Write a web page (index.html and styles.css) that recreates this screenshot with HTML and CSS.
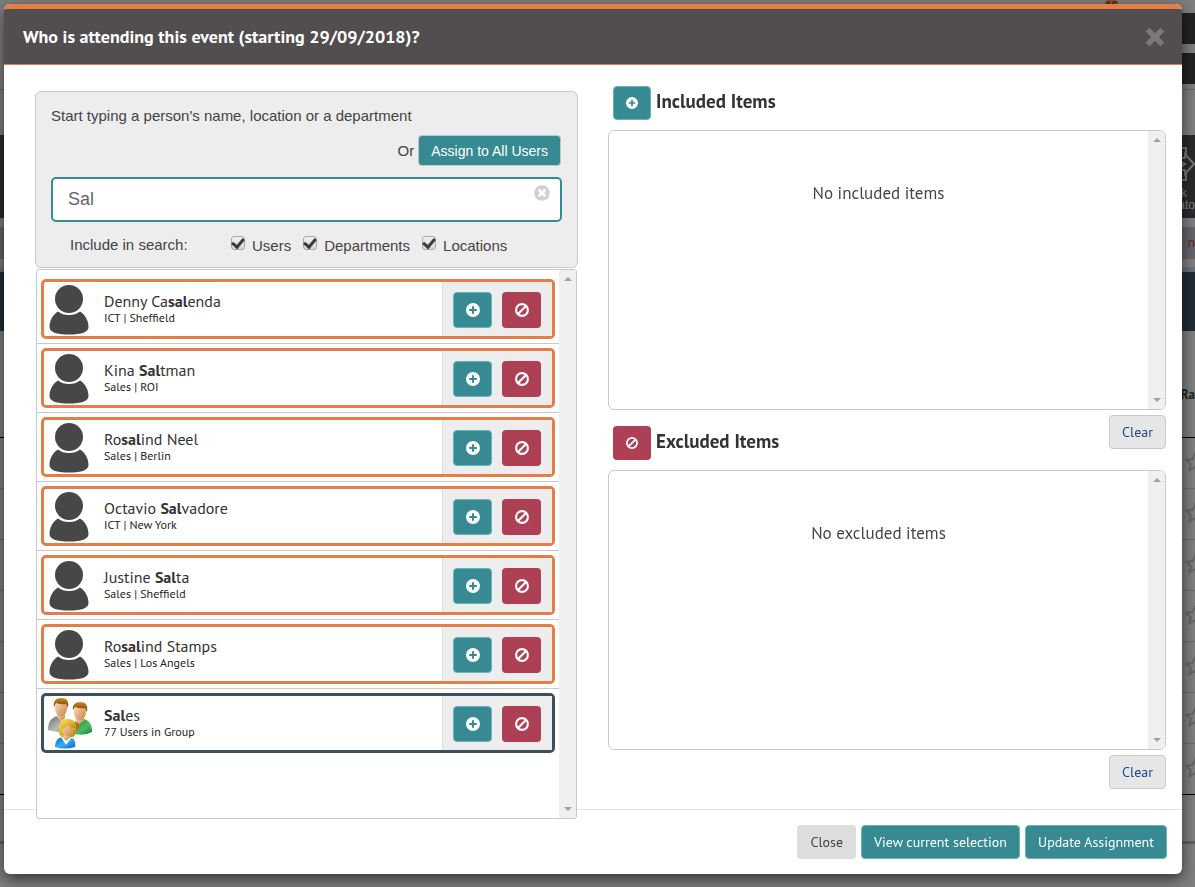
FILE: index.html
```html
<!DOCTYPE html>
<html lang="en">
<head>
<meta charset="utf-8">
<title>Event attendance</title>
<link rel="stylesheet" href="styles.css">
</head>
<body>
<svg class="sprite" aria-hidden="true">
  <symbol id="plus" viewBox="0 0 14 14"><path fill="currentColor" fill-rule="evenodd" d="M7 0a7 7 0 1 1 0 14A7 7 0 0 1 7 0zM6 3.2V6H3.2v2H6v2.8h2V8h2.800V6H8V3.200z"/></symbol>
  <symbol id="ban" viewBox="0 0 14 14"><g fill="none" stroke="currentColor" stroke-width="2.100"><circle cx="7" cy="7" r="5.900"/><path d="M3 11L11 3"/></g></symbol>
  <symbol id="times" viewBox="0 0 20 20"><path d="M4.500 4.500l11 11M15.500 4.500l-11 11" stroke="currentColor" stroke-width="5.400" stroke-linecap="square" stroke-linejoin="round"/></symbol>
  <symbol id="clear-x" viewBox="0 0 16 16"><circle cx="8" cy="8" r="7.800" fill="#d0d0d0"/><path d="M5.700 5.700l4.600 4.600M10.300 5.700l-4.600 4.600" stroke="#fff" stroke-width="2.800" stroke-linecap="square"/></symbol>
  <symbol id="person" viewBox="0 0 40 50"><circle cx="20" cy="14" r="14" fill="#474747"/><path fill="#474747" d="M9 26.500q4.500 3.500 11 3.500t11-3.500c5 3 8.500 9 8.500 15.500C39.500 47 33 49.500 20 49.500S.5 47 .5 42C.5 35.500 4 29.500 9 26.500z"/></symbol>
  <symbol id="group" viewBox="0 0 46 52">
    <defs>
      <linearGradient id="skin" x1="0" x2="1" y2="1"><stop offset="0" stop-color="#ffe3bd"/><stop offset="1" stop-color="#c68144"/></linearGradient>
      <linearGradient id="grey" x2="1" y2="1"><stop offset="0" stop-color="#6c6c6c"/><stop offset=".6" stop-color="#bcbcbc"/><stop offset="1" stop-color="#636363"/></linearGradient>
      <linearGradient id="green" x2="1" y2="1"><stop offset="0" stop-color="#168237"/><stop offset=".6" stop-color="#4bbc64"/><stop offset="1" stop-color="#168237"/></linearGradient>
      <linearGradient id="blue" x2="1" y2="1"><stop offset="0" stop-color="#0768bb"/><stop offset=".5" stop-color="#36adf3"/><stop offset="1" stop-color="#0768bb"/></linearGradient>
      <linearGradient id="blond" x2="1" y2="1"><stop offset="0" stop-color="#fae04d"/><stop offset="1" stop-color="#b98508"/></linearGradient>
      <linearGradient id="brown" x2="0" y2="1"><stop offset="0" stop-color="#c98f20"/><stop offset="1" stop-color="#6a3506"/></linearGradient>
    </defs>
    <path fill="url(#grey)" d="M1 32c0-8 3-12 9-14l9 4 4 10q-10 4-22 0z"/>
    <path fill="#fff" d="M10 18l5 6 5-5z"/>
    <path fill="url(#skin)" d="M10 15h8v5l-3 3-5-4z"/>
    <ellipse cx="14" cy="10" rx="6" ry="8.500" fill="url(#skin)"/>
    <path fill="url(#brown)" d="M7 9C6 3 9 0 14 0c6 0 8 3 7 10l-2-4q-5 1-10-1z"/>
    <path fill="url(#green)" d="M24 35l2-10 5-3 6-1c6 2 8 6 8 13q-9 5-21 1z"/>
    <path fill="#fff" d="M28 22l3 5 6-5z"/><path fill="#e4521b" d="M30 24h2v7h-3z"/>
    <path fill="url(#skin)" d="M29 18h8v4l-5 4-4-4z"/>
    <ellipse cx="33" cy="14" rx="6" ry="8" fill="url(#skin)"/>
    <path fill="url(#brown)" d="M26 12c-1-5 2-8 7-8 6 0 8 3 7 10l-2-4q-5 1-10-1z"/>
    <path fill="url(#blond)" d="M12 34c-1-9 3-13 9-13s9 4 8 12c0 4-2 6-5 6h-7c-3 0-5-2-5-5z"/>
    <path fill="url(#blue)" d="M8 49c0-6 3-10 9-10h6c4 1 6 4 5 10q-10 3-20 0z"/>
    <path fill="#fff" d="M14 39l5 8 6-8z"/>
    <path fill="url(#skin)" d="M17 36h6v4l-4 3-3-3z"/>
    <ellipse cx="21" cy="31" rx="6" ry="7.500" fill="url(#skin)"/>
    <path fill="url(#blond)" d="M14 31c0-6 3-8 7-8 4 0 7 3 7 7-4 0-7-2-8-3-1 2-3 4-6 4z"/>
  </symbol>
  <symbol id="star" viewBox="0 0 20 20"><path fill="none" stroke="#666" stroke-width="2" d="M10 1.500l2.600 5.600 6.100.8-4.500 4.200 1.200 6.100L10 15.200l-5.400 3 1.200-6.100L1.300 7.900l6.100-.8z"/></symbol>
  <symbol id="exit" viewBox="0 0 14 36"><path fill="none" stroke="#777" stroke-width="2" d="M0 2h5v7M0 34h5v-7M0 12h4V8l9 10-9 10v-4H0M0 16l4 2-4 3"/></symbol>
</svg>

<div class="page" aria-hidden="true">
  <div class="page-top"><span>16</span></div>
  <div class="nav-bar"></div>
  <div class="nav-bar"></div>
  <div class="nav-rule"></div>
  <div class="tiles"><svg width="14" height="36"><use href="#exit"/></svg><span class="tile-end">k</span><span>ato</span></div>
  <div class="crumbs">n</div>
  <div class="banner"></div>
  <div class="table-head">Ra</div>
  <div class="rows">
    <div><svg width="20" height="20"><use href="#star"/></svg></div>
    <div><svg width="20" height="20"><use href="#star"/></svg></div>
    <div><svg width="20" height="20"><use href="#star"/></svg></div>
    <div><svg width="20" height="20"><use href="#star"/></svg></div>
    <div><svg width="20" height="20"><use href="#star"/></svg></div>
    <div><svg width="20" height="20"><use href="#star"/></svg></div>
    <div><svg width="20" height="20"><use href="#star"/></svg></div>
  </div>
  <div class="table-foot"></div>
</div>

<div class="modal" role="dialog" aria-labelledby="title">
  <header class="modal-header">
    <h1 id="title">Who is attending this event (starting 29/09/2018)?</h1>
    <button class="dismiss" type="button" aria-label="Close dialog"><svg width="20" height="20"><use href="#times"/></svg></button>
  </header>

  <div class="modal-body">
    <div class="picker">
      <form class="search">
        <label for="q">Start typing a person's name, location or a department</label>
        <div class="assign">Or <button class="btn btn-assign" type="button">Assign to All Users</button></div>
        <div class="field">
          <input id="q" type="text" value="Sal">
          <button class="field-clear" type="button" aria-label="Clear search"><svg width="16" height="16"><use href="#clear-x"/></svg></button>
        </div>
        <div class="filters">
          <span class="filters-label">Include in search:</span>
          <label><input type="checkbox" checked>Users</label>
          <label><input type="checkbox" checked>Departments</label>
          <label><input type="checkbox" checked>Locations</label>
        </div>
      </form>

      <div class="results">
        <ul>
          <li><div class="card"><svg class="avatar" width="40" height="50"><use href="#person"/></svg><div class="info"><div class="name">Denny Ca<b>sal</b>enda</div><div class="meta">ICT | Sheffield</div></div><div class="actions"><button class="btn btn-teal" type="button" aria-label="Include"><svg width="14" height="14"><use href="#plus"/></svg></button><button class="btn btn-red" type="button" aria-label="Exclude"><svg width="14" height="14"><use href="#ban"/></svg></button></div></div></li>
          <li><div class="card"><svg class="avatar" width="40" height="50"><use href="#person"/></svg><div class="info"><div class="name">Kina <b>Sal</b>tman</div><div class="meta">Sales | ROI</div></div><div class="actions"><button class="btn btn-teal" type="button" aria-label="Include"><svg width="14" height="14"><use href="#plus"/></svg></button><button class="btn btn-red" type="button" aria-label="Exclude"><svg width="14" height="14"><use href="#ban"/></svg></button></div></div></li>
          <li><div class="card"><svg class="avatar" width="40" height="50"><use href="#person"/></svg><div class="info"><div class="name">Ro<b>sal</b>ind Neel</div><div class="meta">Sales | Berlin</div></div><div class="actions"><button class="btn btn-teal" type="button" aria-label="Include"><svg width="14" height="14"><use href="#plus"/></svg></button><button class="btn btn-red" type="button" aria-label="Exclude"><svg width="14" height="14"><use href="#ban"/></svg></button></div></div></li>
          <li><div class="card"><svg class="avatar" width="40" height="50"><use href="#person"/></svg><div class="info"><div class="name">Octavio <b>Sal</b>vadore</div><div class="meta">ICT | New York</div></div><div class="actions"><button class="btn btn-teal" type="button" aria-label="Include"><svg width="14" height="14"><use href="#plus"/></svg></button><button class="btn btn-red" type="button" aria-label="Exclude"><svg width="14" height="14"><use href="#ban"/></svg></button></div></div></li>
          <li><div class="card"><svg class="avatar" width="40" height="50"><use href="#person"/></svg><div class="info"><div class="name">Justine <b>Sal</b>ta</div><div class="meta">Sales | Sheffield</div></div><div class="actions"><button class="btn btn-teal" type="button" aria-label="Include"><svg width="14" height="14"><use href="#plus"/></svg></button><button class="btn btn-red" type="button" aria-label="Exclude"><svg width="14" height="14"><use href="#ban"/></svg></button></div></div></li>
          <li><div class="card"><svg class="avatar" width="40" height="50"><use href="#person"/></svg><div class="info"><div class="name">Ro<b>sal</b>ind Stamps</div><div class="meta">Sales | Los Angels</div></div><div class="actions"><button class="btn btn-teal" type="button" aria-label="Include"><svg width="14" height="14"><use href="#plus"/></svg></button><button class="btn btn-red" type="button" aria-label="Exclude"><svg width="14" height="14"><use href="#ban"/></svg></button></div></div></li>
          <li><div class="card card-group"><svg class="avatar" width="46" height="52"><use href="#group"/></svg><div class="info"><div class="name"><b>Sal</b>es</div><div class="meta">77 Users in Group</div></div><div class="actions"><button class="btn btn-teal" type="button" aria-label="Include"><svg width="14" height="14"><use href="#plus"/></svg></button><button class="btn btn-red" type="button" aria-label="Exclude"><svg width="14" height="14"><use href="#ban"/></svg></button></div></div></li>
        </ul>
        <div class="scrollbar"></div>
      </div>
    </div>

    <div class="selection">
      <div class="heading">
        <button class="btn btn-teal" type="button" aria-label="Include"><svg width="12" height="12"><use href="#plus"/></svg></button>
        <h2>Included Items</h2>
      </div>
      <div class="box"><p>No included items</p><div class="scrollbar"></div></div>
      <div class="between">
        <div class="heading">
          <button class="btn btn-red" type="button" aria-label="Exclude"><svg width="12" height="12"><use href="#ban"/></svg></button>
          <h2>Excluded Items</h2>
        </div>
        <button class="btn btn-clear" type="button">Clear</button>
      </div>
      <div class="box"><p>No excluded items</p><div class="scrollbar"></div></div>
      <div class="after"><button class="btn btn-clear" type="button">Clear</button></div>
    </div>
  </div>

  <footer class="modal-footer">
    <button class="btn btn-close" type="button">Close</button>
    <button class="btn btn-teal" type="button">View current selection</button>
    <button class="btn btn-teal" type="button">Update Assignment</button>
  </footer>
</div>
</body>
</html>
```
FILE: styles.css
```css
:root {
  --teal: #378a91;
  --red: #ae4056;
  --orange: #e67d48;
  --line: #c9c9c9;
  --ui: "PT Sans", "Noto Sans", sans-serif;
  --plain: Arial, "Liberation Sans", sans-serif;
}
* { box-sizing: border-box; }
body { margin: 0; background: #7c7c7c; color: #333; font: 14px/20px var(--ui); }
h1, h2, p, ul { margin: 0; padding: 0; }
ul { list-style: none; }
svg { display: block; flex: none; }
.sprite { position: absolute; width: 0; height: 0; }

/* dimmed page under the dialog */
.page { position: fixed; inset: 0; overflow: hidden; background: #7f7f7f; text-align: right; }
.page-top { height: 13px; padding-right: 77px; font: bold 12px/13px var(--plain); color: #333; }
.page-top span { display: inline-block; margin-top: -9px; border-radius: 4px; background: #9b4a25; }
.nav-bar { width: 20%; height: 31px; margin: 0 0 9px auto; background: #222; }
.nav-rule { height: 47px; margin-top: -4px; border-top: 1px solid #666; }
.tiles { height: 83px; margin-top: -1px; padding-top: 11px; border-bottom: 2px solid #1c2c36; background: #2b2b2b; color: #858585; font: 12px/12px var(--plain); }
.tiles span { display: block; }
.tiles .tile-end { padding-right: 8px; }
.tiles svg { margin: 0 0 5px auto; }
.crumbs { height: 32px; margin-top: 9px; background: #66666b; color: #6b1c1c; font: 13px/32px var(--plain); }
.banner { height: 64px; margin-top: 8px; border-top: 5px solid #6a7278; background: #1f2d37; }
.table-head { height: 107px; padding-top: 54px; border-bottom: 1px solid #000; font-size: 13px; font-weight: bold; color: #222; }
.rows div { display: flex; align-items: center; justify-content: flex-end; height: 51px; padding-bottom: 3px; border-bottom: 1px solid #6c6c6c; }
.rows svg { margin-right: -10px; }
.rows div:last-child { border-color: #000; }
.table-foot { height: 49px; border-bottom: 3px solid #606060; }

.modal { position: relative; margin: 4px 13px 13px 4px; border-radius: 6px; background: #fff; box-shadow: 0 5px 15px rgba(0, 0, 0, .6); }
.modal-header { display: flex; align-items: center; justify-content: space-between; padding: 17px 17px 17px 19px; border-top: 5px solid var(--orange); border-bottom: 1px solid var(--orange); border-radius: 6px 6px 0 0; background: #524d4e; }
h1 { font-size: 18px; line-height: 21px; color: #fff; }
.dismiss, .field-clear { padding: 0; border: 0; background: none; color: #7b7877; }

.modal-body { display: grid; grid-template-columns: 543fr 558fr; column-gap: 30px; padding: 21px 16px 20px 31px; border-bottom: 1px solid #e5e5e5; }

.btn { display: inline-flex; align-items: center; justify-content: center; height: 34px; padding: 0 12px; border: 1px solid transparent; border-radius: 4px; font: 14px/20px var(--ui); color: #fff; }
.btn-teal { border-color: #67b5bb; background: var(--teal); }
.btn-red { background: var(--red); }
.btn-close { background: #ddd; color: #444; }
.btn-clear { border-color: var(--line); background: #e6e6e6; color: #1f4788; }
.btn-assign { height: 31px; margin-left: 4px; border-color: #b9c9ca; background: var(--teal); font: 14px/20px var(--plain); }

.picker { margin: 5px 0 -30px; }
.search { padding: 14px 15px 11px; border: 1px solid var(--line); border-radius: 6px; background: #ededed; font: 15px/20px var(--plain); color: #444; }
.search > label { display: block; }
.assign { display: flex; align-items: center; justify-content: flex-end; margin-top: 9px; padding-right: 1px; }
.field { position: relative; margin-top: 11px; }
.field input { display: block; width: 100%; height: 45px; padding: 0 40px 0 15px; border: 2px solid var(--teal); border-radius: 5px; background: #fff; font: 18px/24px var(--plain); color: #666; outline: 0; }
.field-clear { position: absolute; top: 8px; right: 12px; }
.filters { display: flex; align-items: flex-start; margin-top: 12px; padding-left: 19px; }
.filters-label { flex: 0 0 161px; padding-top: 1px; }
.filters label { display: flex; align-items: flex-start; margin-right: 12px; padding-top: 2px; }
.filters input { appearance: none; display: flex; align-items: center; justify-content: center; width: 14px; height: 14px; margin: 0 7px 0 0; border: 1px solid #a8a8a8; border-radius: 3px; background: linear-gradient(#f0f0f0, #d8d8d8); }
.filters input:checked::before { content: ""; width: 5px; height: 9px; margin-bottom: 2px; border: solid #3c3c3c; border-width: 0 3px 3px 0; transform: rotate(40deg); }

.results { position: relative; display: flex; height: 550px; margin: 1px 1px 0; border: 1px solid var(--line); border-radius: 3px; background: #fff; }
.results ul { flex: 1; padding-top: 5px; }
.results li { padding: 4px; border-bottom: 1px solid var(--line); }
.results li:last-child { border-bottom: 0; }
.card { display: flex; align-items: center; height: 60px; border: 3px solid var(--orange); border-radius: 5px; }
.card-group { border-color: #3b4f5f; }
.avatar { margin: 2px 0 0 5px; }
.info { flex: 1; margin-left: 15px; padding-bottom: 1px; }
.card-group .avatar { margin-left: 3px; }
.card-group .info { margin-left: 11px; }
.name { font-size: 16px; line-height: 18px; }
.meta { font-size: 12px; line-height: 16px; color: #222; }
.actions { display: flex; align-items: center; align-self: stretch; gap: 10px; padding: 2px 11px 0 10px; border-left: 1px solid #ddd; background: #ededed; }
.actions .btn { width: 39px; height: 36px; padding: 0; }

.scrollbar { display: flex; flex-direction: column; flex: 0 0 17px; align-items: center; justify-content: space-between; padding: 7px 0; background: #f0f0f0; }
.scrollbar::before, .scrollbar::after { content: ""; border: 4px solid transparent; }
.scrollbar::before { border-top: 0; border-bottom-color: #a0a0a0; }
.scrollbar::after { border-bottom: 0; border-top-color: #a0a0a0; }

.heading { display: flex; padding-left: 5px; }
.heading .btn { width: 38px; padding: 0; }
h2 { margin-left: 5px; font-size: 19px; line-height: 30px; font-weight: bold; }
.box { display: flex; height: 280px; margin-top: 10px; border: 1px solid var(--line); border-radius: 6px; overflow: hidden; }
.box p { flex: 1; padding-top: 52px; font-size: 17px; text-align: center; color: #444; }
.between { display: flex; justify-content: space-between; height: 45px; margin-top: 5px; }
.between .heading { align-self: flex-end; }
.after { margin-top: 5px; display: flex; justify-content: flex-end; }

.modal-footer { display: flex; justify-content: flex-end; gap: 5px; padding: 15px; }
```
